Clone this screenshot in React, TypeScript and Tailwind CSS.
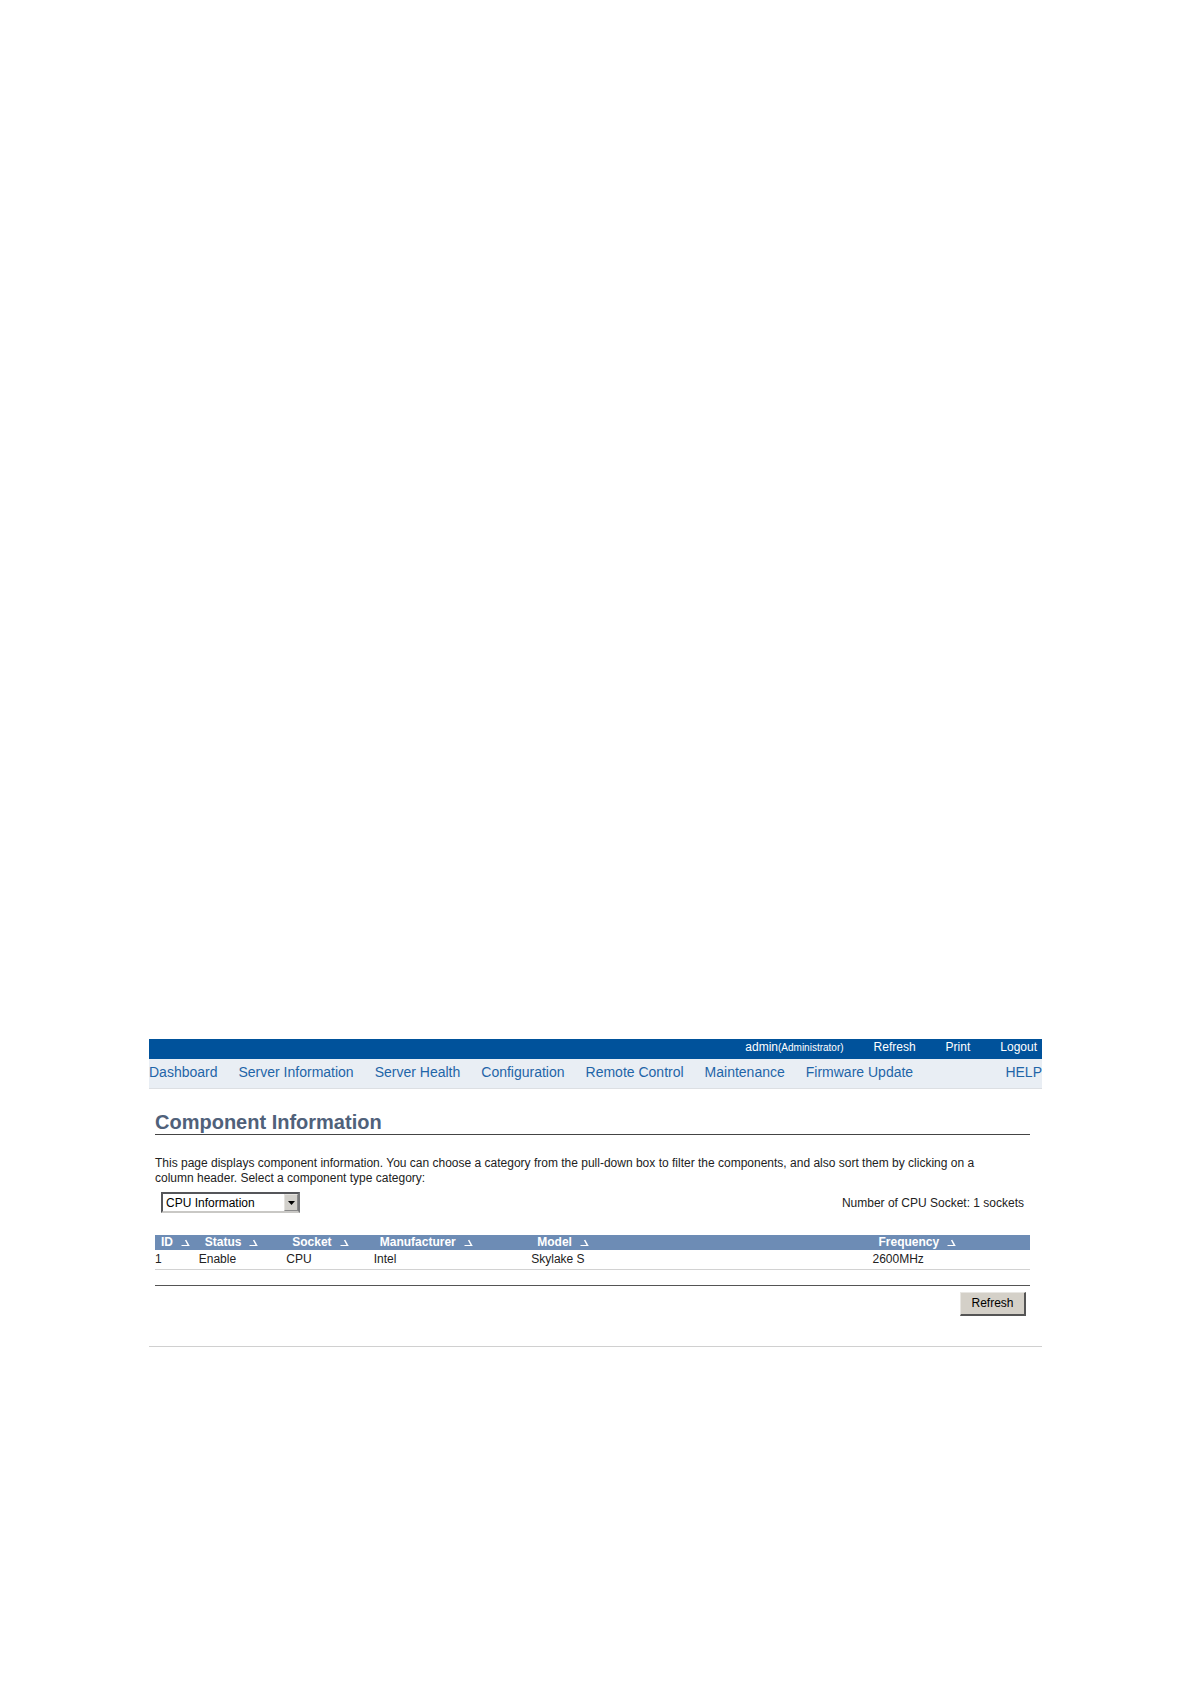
import { useState } from 'react';

const NAV_ITEMS = [
  'Dashboard',
  'Server Information',
  'Server Health',
  'Configuration',
  'Remote Control',
  'Maintenance',
  'Firmware Update',
];

const COLUMNS = [
  { key: 'id', label: 'ID', width: 'w-[5%]' },
  { key: 'status', label: 'Status', width: 'w-[10%]' },
  { key: 'socket', label: 'Socket', width: 'w-[10%]' },
  { key: 'manufacturer', label: 'Manufacturer', width: 'w-[18%]' },
  { key: 'model', label: 'Model', width: 'w-[39%]' },
  { key: 'frequency', label: 'Frequency', width: 'w-[18%]' },
] as const;

const CPUS = [
  { id: '1', status: 'Enable', socket: 'CPU', manufacturer: 'Intel', model: 'Skylake S', frequency: '2600MHz' },
];

function SortIcon() {
  return (
    <svg className="h-2 w-2.5" viewBox="0 0 10 8" fill="none" aria-hidden="true">
      <path d="M0.5 6.5H8.5" stroke="white" strokeWidth="1" />
      <path d="M4.6 1L7.4 6.2" stroke="white" strokeWidth="1.5" />
    </svg>
  );
}

function TopBar() {
  return (
    <div className="flex h-5 items-start justify-end gap-[30px] bg-[#00529b] pr-[5px] text-[12px] leading-4 text-white">
      <span>
        admin<span className="text-[10px]">(Administrator)</span>
      </span>
      <a href="#refresh">Refresh</a>
      <a href="#print">Print</a>
      <a href="#logout">Logout</a>
    </div>
  );
}

function NavBar() {
  return (
    <nav className="flex h-[30px] items-start gap-[21px] border-b border-[#dcdfe3] bg-[#e9eef4] pt-1 text-[14px] leading-[18px] text-[#1f65a8]">
      {NAV_ITEMS.map((item) => (
        <a key={item} href="#" className="whitespace-nowrap">
          {item}
        </a>
      ))}
      <a href="#help" className="ml-auto">
        HELP
      </a>
    </nav>
  );
}

function CategorySelect() {
  const [category, setCategory] = useState('cpu');

  return (
    <div className="relative w-[139px]">
      <select
        aria-label="Component type category"
        value={category}
        onChange={(e) => setCategory(e.target.value)}
        className="block h-[21px] w-full appearance-none border-2 border-t-[#55565a] border-r-[#77787a] border-b-[#c9c8c5] border-l-[#55565a] bg-white pl-[3px] text-[12px] leading-4 text-black"
      >
        <option value="cpu">CPU Information</option>
      </select>
      <span className="pointer-events-none absolute top-0.5 right-0.5 flex h-[17px] w-[14px] items-center justify-center border border-t-[#e4e2de] border-r-[#8a8a8a] border-b-[#8a8a8a] border-l-[#e4e2de] bg-[#d2d0cb]">
        <svg className="h-1 w-[7px]" viewBox="0 0 7 4" aria-hidden="true">
          <path d="M0 0H7L3.5 4Z" fill="black" />
        </svg>
      </span>
    </div>
  );
}

function ComponentTable() {
  return (
    <table className="mt-[22px] w-full table-fixed border-collapse text-left text-[12px]">
      <thead>
        <tr className="bg-[#6d8cb5] text-white">
          {COLUMNS.map((col) => (
            <th key={col.key} className={`${col.width} p-0 pl-1.5 leading-[15px] font-bold`}>
              <span className="flex items-center gap-2">
                {col.label}
                <SortIcon />
              </span>
            </th>
          ))}
        </tr>
      </thead>
      <tbody>
        {CPUS.map((cpu) => (
          <tr key={cpu.id} className="border-b border-[#d2d2d2]">
            {COLUMNS.map((col) => (
              <td key={col.key} className="h-[19px] p-0 leading-4">
                {cpu[col.key]}
              </td>
            ))}
          </tr>
        ))}
      </tbody>
    </table>
  );
}

export default function App() {
  return (
    <div className="min-h-screen bg-white pt-[1039px] pr-[148px] pl-[149px] font-['Liberation_Sans',Arial,sans-serif] text-[#222]">
      <TopBar />
      <NavBar />
      <main className="border-b border-[#d0d0d0] pr-3 pb-[30px] pl-1.5">
        <h1 className="mt-[21px] border-b border-[#444] text-[20px] leading-6 font-bold text-[#50617a]">
          Component Information
        </h1>
        <p className="mt-[21px] pr-5 text-[12px] leading-[15px]">
          This page displays component information. You can choose a category from the pull-down box to filter the
          components, and also sort them by clicking on a column header. Select a component type category:
        </p>
        <div className="mt-1.5 flex items-center justify-between pr-1.5 pl-1.5 text-[12px]">
          <CategorySelect />
          <span>Number of CPU Socket: 1 sockets</span>
        </div>
        <ComponentTable />
        <hr className="mt-[15px] border-t border-[#555]" />
        <div className="mt-1.5 flex justify-end pr-1">
          <button
            type="button"
            className="h-6 w-[66px] border border-t-[#e8e6e2] border-r-2 border-r-[#555] border-b-2 border-b-[#555] border-l-[#e8e6e2] bg-[#d4d0c8] text-[12px] leading-4 text-black"
          >
            Refresh
          </button>
        </div>
      </main>
    </div>
  );
}
